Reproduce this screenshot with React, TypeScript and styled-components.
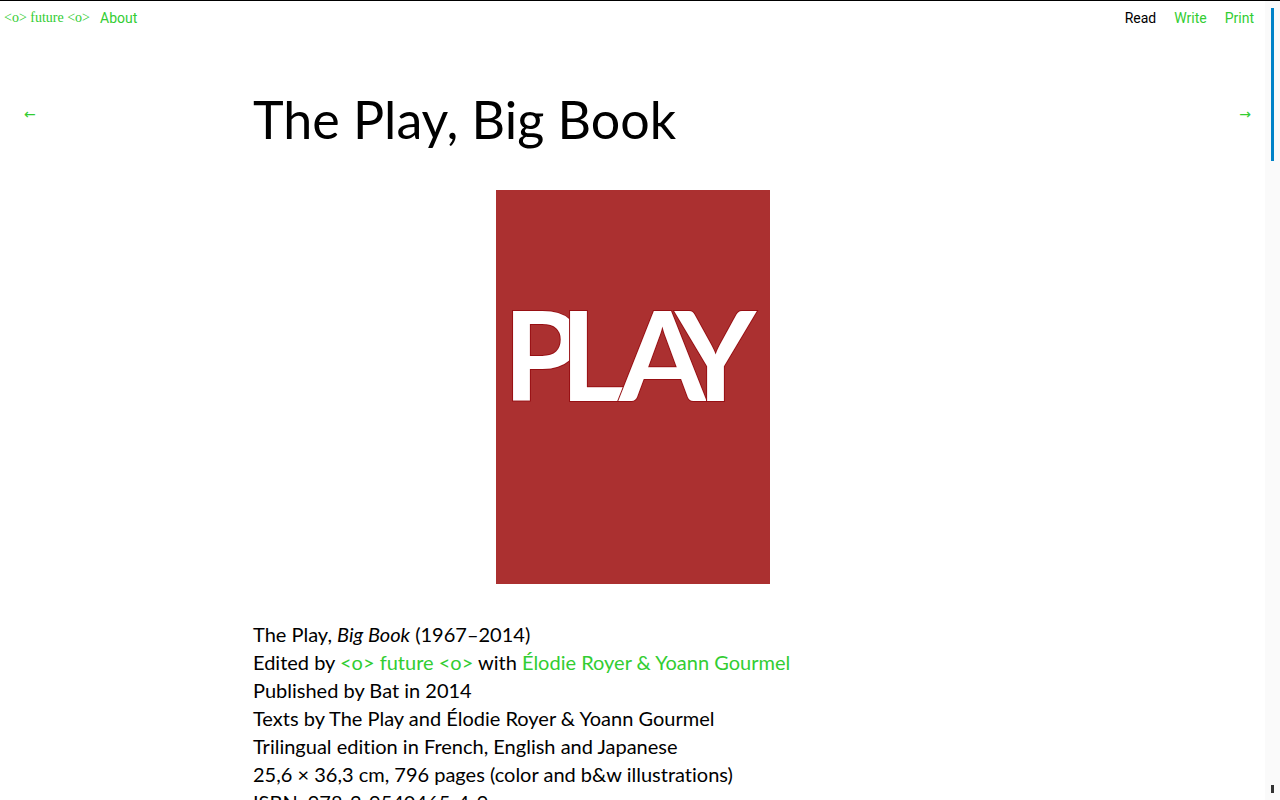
import React from "react";
import styled, { createGlobalStyle } from "styled-components";

const GlobalStyle = createGlobalStyle`
  *, *::before, *::after { box-sizing: border-box; }
  body {
    margin: 0;
    background: #fff;
    color: #000;
    font-family: Lato, "Noto Sans", sans-serif;
    font-variant-ligatures: none;
    overflow: hidden;
  }
`;

const Page = styled.div`
  display: flex;
  height: 100vh;
  border-top: 1px solid #000;
  overflow: hidden;
`;

const Content = styled.div`
  flex: 1;
  min-width: 0;
`;

const Header = styled.header`
  display: flex;
  justify-content: space-between;
  padding: 8px 11px 0 4px;
  font-family: Roboto, sans-serif;
  font-size: 14px;
  line-height: 18px;
`;

const Nav = styled.nav<{ $gap: number }>`
  display: flex;
  gap: ${(p) => p.$gap}px;
`;

const Link = styled.a<{ $current?: boolean }>`
  color: ${(p) => (p.$current ? "#000" : "#32cd32")};
  text-decoration: none;
`;

const Brand = styled(Link)`
  font-family: "Liberation Serif", serif;
`;

const Body = styled.div`
  display: grid;
  grid-template-columns: 20% minmax(0, 1fr) 20%;
  padding-top: 62px;
`;

const Pager = styled(Link)<{ $end?: boolean }>`
  justify-self: ${(p) => (p.$end ? "end" : "start")};
  align-self: start;
  padding: 15px 14px 0 24px;
  font-family: "DejaVu Sans", sans-serif;
  font-size: 14px;
  line-height: 20px;
`;

const Title = styled.h1`
  margin: 0;
  font-size: 52px;
  font-weight: 400;
  line-height: 60px;
`;

const Cover = styled.svg`
  display: block;
  width: 274px;
  height: 394px;
  margin: 41px auto 36px;
  background: #ab3030;
`;

const CoverWord = styled.text`
  font-family: Lato, sans-serif;
  font-weight: 700;
  font-size: 125px;
  fill: #fff;
  stroke: #970f13;
  stroke-width: 2px;
  paint-order: stroke;
`;

const Details = styled.p`
  margin: 0;
  font-size: 20px;
  line-height: 28px;
  white-space: nowrap;
`;

const Rail = styled.aside`
  display: flex;
  flex-direction: column;
  justify-content: space-between;
  align-items: center;
  width: 15px;
  padding: 7px 0;
  background: #fafafa;
`;

const Marker = styled.span<{ $height: string; $color: string }>`
  width: 3px;
  height: ${(p) => p.$height};
  background: ${(p) => p.$color};
`;

export default function App() {
  return (
    <>
      <GlobalStyle />
      <Page>
        <Content>
          <Header>
            <Nav $gap={10} aria-label="Site">
              <Brand href="#home">&lt;o&gt; future &lt;o&gt;</Brand>
              <Link href="#about">About</Link>
            </Nav>
            <Nav $gap={18} aria-label="Mode">
              <Link href="#read" $current aria-current="page">Read</Link>
              <Link href="#write">Write</Link>
              <Link href="#print">Print</Link>
            </Nav>
          </Header>
          <Body>
            <Pager href="#previous" aria-label="Previous">←</Pager>
            <main>
              <Title>The Play, Big Book</Title>
              <Cover viewBox="0 0 274 394" role="img" aria-label="Play book cover">
                <CoverWord x="7 64 123 179" y="211">PLAY</CoverWord>
              </Cover>
              <Details>
                The Play, <em>Big Book</em> (1967–2014)<br />
                Edited by <Link href="#future">&lt;o&gt; future &lt;o&gt;</Link> with{" "}
                <Link href="#editors">Élodie Royer &amp; Yoann Gourmel</Link><br />
                Published by Bat in 2014<br />
                Texts by The Play and Élodie Royer &amp; Yoann Gourmel<br />
                Trilingual edition in French, English and Japanese<br />
                25,6 × 36,3 cm, 796 pages (color and b&amp;w illustrations)<br />
                ISBN: 978-2-9540465-4-9
              </Details>
            </main>
            <Pager href="#next" aria-label="Next" $end>→</Pager>
          </Body>
        </Content>
        <Rail>
          <Marker $height="153px" $color="#0082c8" />
          <Marker $height="8px" $color="#333" />
        </Rail>
      </Page>
    </>
  );
}
